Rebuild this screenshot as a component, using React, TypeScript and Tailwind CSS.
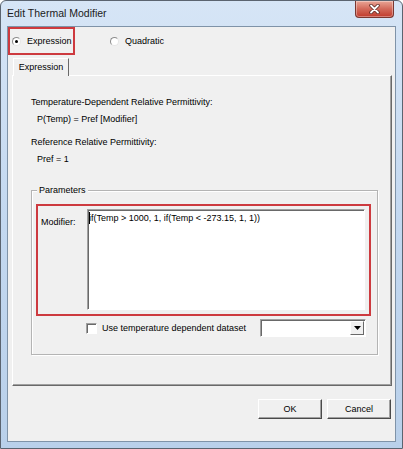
import React from "react";

const ui = "font-['Liberation_Sans',Arial,sans-serif]";

function Radio({ checked, label }: { checked?: boolean; label: string }) {
  return (
    <div className="flex items-center gap-[6px]">
      <div className="flex h-[9px] w-[9px] items-center justify-center rounded-full border border-[#8c8c8c] border-b-[#e6e6e6] border-r-[#e6e6e6] bg-white">
        {checked && <div className="h-[3px] w-[3px] rounded-full bg-black" />}
      </div>
      <span className="text-[9px] leading-[11px] text-black">{label}</span>
    </div>
  );
}

function Button({ children }: { children: React.ReactNode }) {
  return (
    <button className="flex h-[20px] w-[64px] items-center justify-center border border-white border-b-[#4a4a4a] border-r-[#4a4a4a] bg-[#f0f0f0] text-[9px] leading-[11px] text-black shadow-[inset_-1px_-1px_0_#a0a0a0]">
      {children}
    </button>
  );
}

export default function App() {
  return (
    <div className={`${ui} h-[449px] w-[403px] bg-white`}>
      {/* window frame */}
      <div className="flex h-full flex-col rounded-t-[6px] border border-[#5b6470] bg-gradient-to-b from-[#d6e5f6] via-[#c3d8f0] to-[#b9d0ea]">
        {/* title bar */}
        <div className="flex h-[25px] items-start justify-between pl-[6px] pr-[8px]">
          <span className="mt-[6px] text-[10.5px] leading-[13px] text-[#1b1b1b]">Edit Thermal Modifier</span>
          <div className="flex h-[17px] w-[39px] items-center justify-center rounded-b-[4px] border border-t-0 border-[#7a3730] bg-gradient-to-b from-[#e9a596] via-[#d2695a] to-[#c0392b] shadow-[inset_0_0_0_1px_rgba(255,255,255,0.35)]">
            <svg width="11" height="10" viewBox="0 0 11 10">
              <path d="M2 1.5 L9 8.5 M9 1.5 L2 8.5" stroke="#5a2520" strokeWidth="3.4" strokeLinecap="round" />
              <path d="M2 1.5 L9 8.5 M9 1.5 L2 8.5" stroke="#ffffff" strokeWidth="1.8" strokeLinecap="round" />
            </svg>
          </div>
        </div>

        {/* client area */}
        <div className="mx-[6px] mb-[6px] flex flex-1 flex-col border border-[#7f93a8] bg-[#f0f0f0]">
          {/* mode radios */}
          <div className="flex h-[28px] items-center">
            <div className="flex h-[28px] w-[67px] items-center border-2 border-[#cd3a3f] pl-[2px]">
              <Radio checked label="Expression" />
            </div>
            <div className="ml-[35px]">
              <Radio label="Quadratic" />
            </div>
          </div>

          {/* tab strip */}
          <div className="mt-[3px] flex pl-[5px]">
            <div className="relative z-10 -mb-px flex h-[18px] w-[56px] items-center justify-center border border-b-0 border-white border-r-[#696969] bg-[#f0f0f0] text-[9px] leading-[11px] text-black">
              Expression
            </div>
          </div>

          {/* tab pane */}
          <div className="ml-[4px] mr-[3px] flex h-[311px] flex-col border border-white border-b-[#696969] border-r-[#696969] pl-[18px] pt-[21px] shadow-[inset_-1px_-1px_0_#a0a0a0] text-[9px] leading-[11px] text-black">
            <div>Temperature-Dependent Relative Permittivity:</div>
            <div className="mt-[6px] pl-[6px]">P(Temp) = Pref [Modifier]</div>
            <div className="mt-[12px]">Reference Relative Permittivity:</div>
            <div className="mt-[6px] pl-[6px]">Pref = 1</div>

            {/* parameters group */}
            <div className="relative mt-[25px] h-[165px] w-[347px] border border-[#b4b4b4] shadow-[inset_1px_1px_0_#ffffff,1px_1px_0_#ffffff] px-[4px] pt-[13px]">
              <span className="absolute -top-[6px] left-[5px] bg-[#f0f0f0] px-[2px]">Parameters</span>

              <div className="flex h-[112px] w-[335px] border-2 border-[#cd3a3f] pl-[3px] pt-[3px]">
                <span className="mt-[8px] w-[46px]">Modifier:</span>
                <div className="flex h-[101px] w-[278px] items-start border border-[#a0a0a0] border-b-white border-r-white bg-white shadow-[inset_1px_1px_0_#696969] pl-[1px] pt-[3px]">
                  <span className="mt-[-1px] h-[12px] w-px bg-black" />
                  <span className="-ml-px">if(Temp &gt; 1000, 1, if(Temp &lt; -273.15, 1, 1))</span>
                </div>
              </div>

              <div className="mt-[3px] flex h-[18px] items-center pl-[50px]">
                <div className="h-[11px] w-[11px] border border-[#a0a0a0] border-b-white border-r-white bg-white shadow-[inset_1px_1px_0_#696969]" />
                <span className="ml-[5px]">Use temperature dependent dataset</span>
                <div className="ml-[14px] flex h-[18px] w-[106px] items-center justify-end border border-[#a0a0a0] border-b-white border-r-white bg-white pr-[1px] shadow-[inset_1px_1px_0_#696969]">
                  <div className="flex h-[14px] w-[14px] items-center justify-center border border-white border-b-[#696969] border-r-[#696969] bg-[#f0f0f0]">
                    <svg width="7" height="4" viewBox="0 0 7 4">
                      <path d="M0 0 H7 L3.5 4 Z" fill="#000" />
                    </svg>
                  </div>
                </div>
              </div>
            </div>
          </div>

          {/* dialog buttons */}
          <div className="mr-[4px] mt-[13px] flex justify-end gap-[5px]">
            <Button>OK</Button>
            <Button>Cancel</Button>
          </div>
        </div>
      </div>
    </div>
  );
}
